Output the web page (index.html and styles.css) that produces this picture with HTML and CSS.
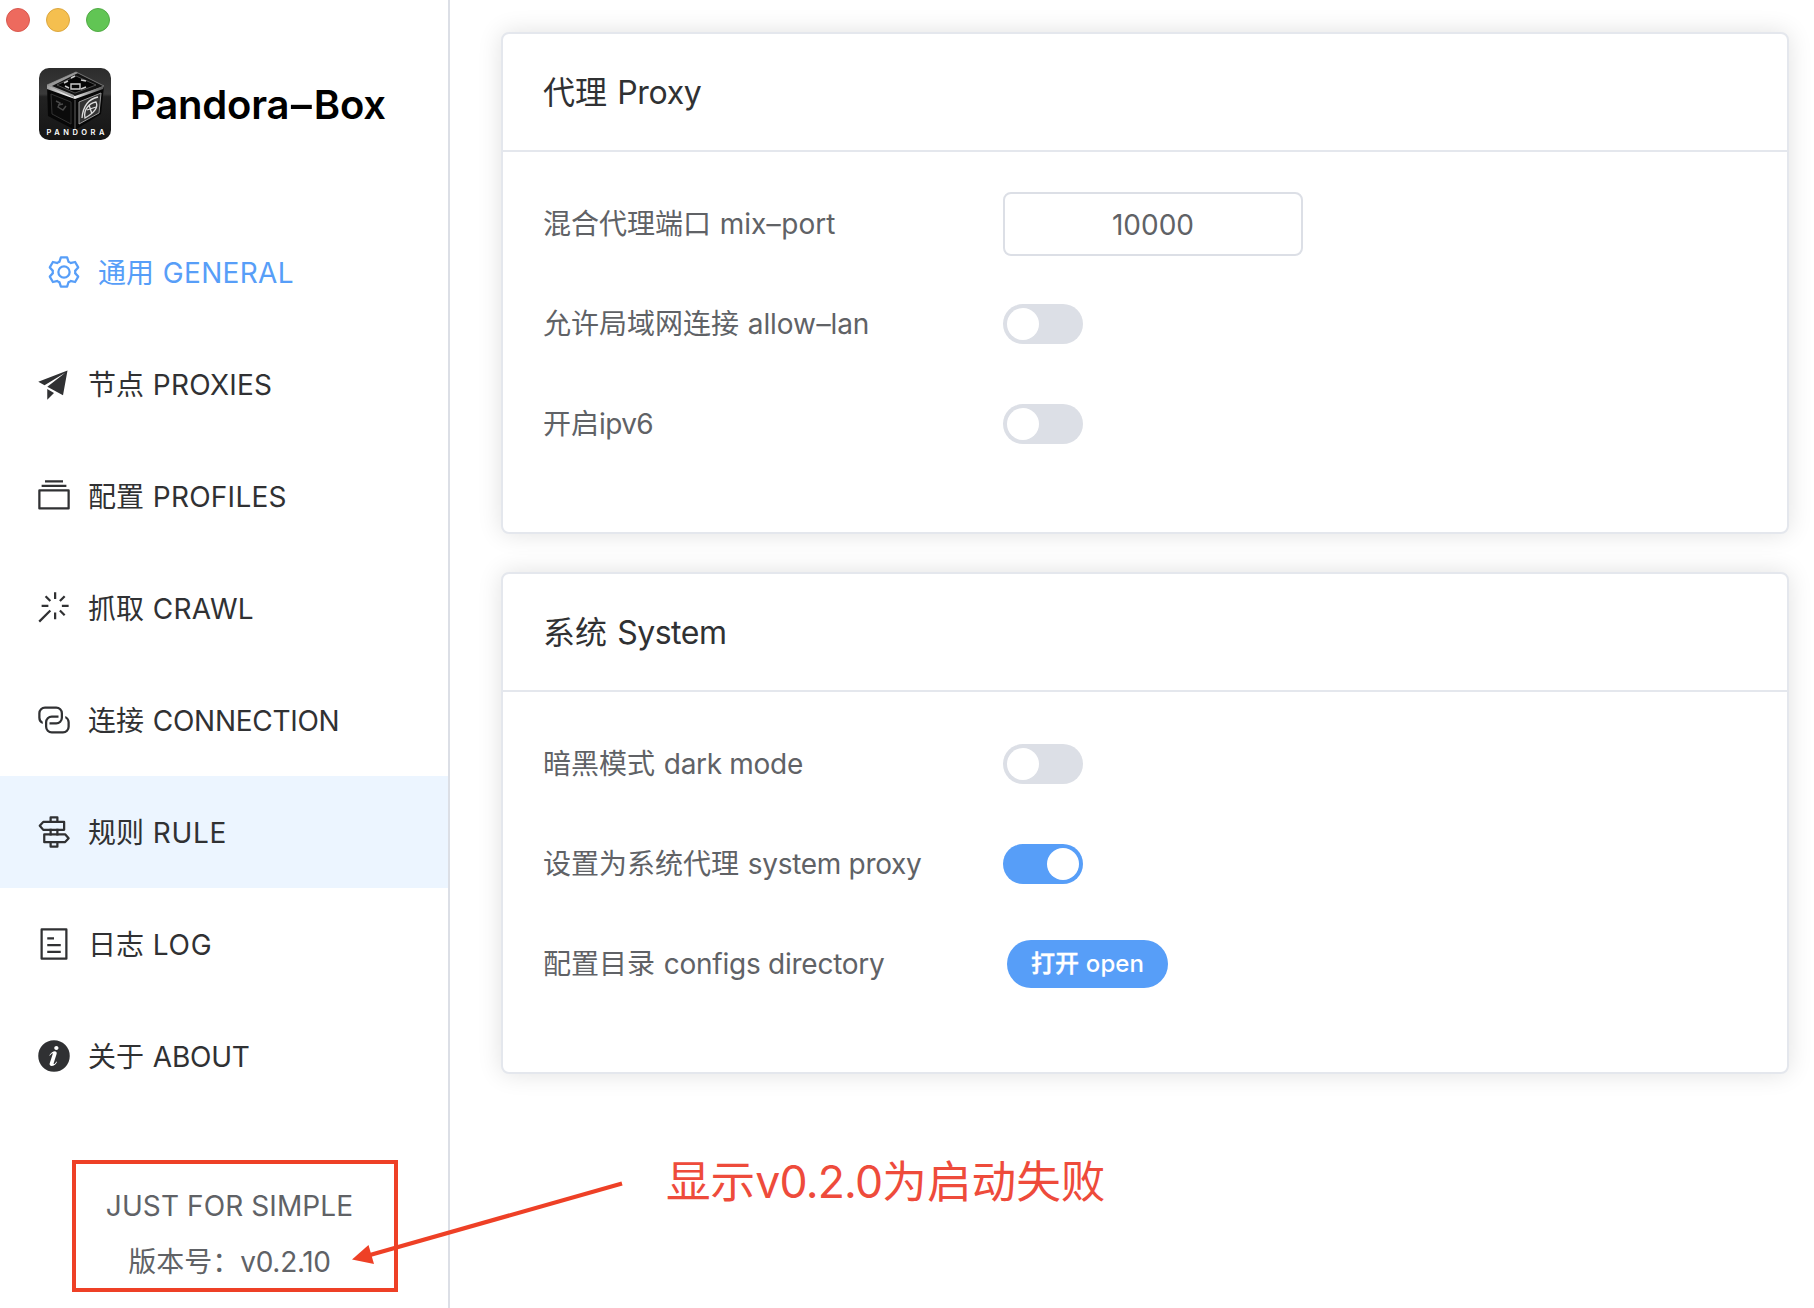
FILE: index.html
```html
<!DOCTYPE html>
<html lang="zh-CN">
<head>
<meta charset="utf-8">
<title>Pandora-Box</title>
<link rel="stylesheet" href="styles.css">
</head>
<body>
<div class="app">
  <aside class="sidebar">
    <div class="lights"><i class="light red"></i><i class="light yellow"></i><i class="light green"></i></div>
    <div class="brand">
      <svg class="logo" viewBox="0 0 72 72">
        <defs>
          <linearGradient id="bg" x1="0" y1="0" x2="0" y2="1"><stop offset="0" stop-color="#2c2c2c"/><stop offset=".36" stop-color="#3a3a3a"/><stop offset=".4" stop-color="#222"/><stop offset="1" stop-color="#151515"/></linearGradient>
          <linearGradient id="edge" x1="0" y1="0" x2="1" y2="0"><stop offset="0" stop-color="#999"/><stop offset=".4" stop-color="#fff"/><stop offset="1" stop-color="#555"/></linearGradient>
        </defs>
        <rect width="72" height="72" rx="10" fill="url(#bg)"/>
        <path d="M8 17 37 4l28 14-3 28-26 16L9 48z" fill="#070707"/>
        <path d="M8 17 37 4l28 14-29 12z" fill="#111" stroke="#777" stroke-width="1"/>
        <path d="M8 17l28 11 29-10-1 3-28 10L8 21z" fill="url(#edge)"/>
        <path d="M8 17 37 4l2 1-26 13 22 9v3z" fill="#999"/>
        <path d="M18 17 37 8l20 9-21 8z" fill="#050505" stroke="#777" stroke-width=".6"/>
        <path d="M32 16h9v5h-9zM25 15l4-2m-3 5 4 2m12-8 5 1m-5 8 5-2m-15-9 4-2" fill="none" stroke="#ccc" stroke-width="1.4"/>
        <path d="M36 32v30" stroke="#444" stroke-width="1.5"/>
        <path d="M12 26l20 8v22L13 46z" fill="#0b0b0b" stroke="#333"/>
        <path d="M17 33l4 2-2 4 5 3 3-4m-8-1 5-1" fill="none" stroke="#4a4a4a" stroke-width="1.4"/>
        <path d="M40 34l22-9-2 20-20 11z" fill="#333" stroke="#999" stroke-width="1"/>
        <path d="M43 50c1-12 7-19 16-21M46 50c-2-9 5-15 11-16 3 6-4 12-11 16zM50 37l3 9m-5-4 9-3" fill="none" stroke="#ddd" stroke-width="1.3"/>
        <text x="7.500" y="66.500" textLength="58" class="logo-text">PANDORA</text>
      </svg>
      <h1 class="title">Pandora<span class="dash">-</span>Box</h1>
    </div>
    <nav class="menu">
      <a class="item current"><svg class="icon" viewBox="0 0 1024 1024"><path d="M600.704 64a32 32 0 0 1 30.464 22.208l35.2 109.376c14.784 7.232 28.928 15.36 42.432 24.512l112.384-24.192a32 32 0 0 1 34.432 15.36L944.32 364.8a32 32 0 0 1-4.032 37.504l-77.12 85.12a357.12 357.12 0 0 1 0 49.024l77.12 85.248a32 32 0 0 1 4.032 37.504l-88.704 153.6a32 32 0 0 1-34.432 15.296L708.8 803.904c-13.44 9.088-27.648 17.28-42.368 24.512l-35.264 109.376A32 32 0 0 1 600.704 960H423.296a32 32 0 0 1-30.464-22.208L357.696 828.48a351.616 351.616 0 0 1-42.56-24.64l-112.32 24.256a32 32 0 0 1-34.432-15.36L79.68 659.2a32 32 0 0 1 4.032-37.504l77.12-85.248a357.12 357.12 0 0 1 0-48.896l-77.12-85.248A32 32 0 0 1 79.68 364.8l88.704-153.6a32 32 0 0 1 34.432-15.296l112.32 24.256c13.568-9.152 27.776-17.408 42.56-24.64l35.2-109.312A32 32 0 0 1 423.232 64H600.64zm-23.424 64H446.72l-36.352 113.088-24.512 11.968a294.113 294.113 0 0 0-34.816 20.096l-22.656 15.36-116.224-25.088-65.28 113.152 79.68 88.192-1.92 27.136a293.12 293.12 0 0 0 0 40.192l1.92 27.136-79.808 88.192 65.344 113.152 116.224-25.024 22.656 15.296a294.113 294.113 0 0 0 34.816 20.096l24.512 11.968L446.72 896h130.688l36.48-113.152 24.448-11.904a288.282 288.282 0 0 0 34.752-20.096l22.592-15.296 116.288 25.024 65.28-113.152-79.744-88.192 1.92-27.136a293.12 293.12 0 0 0 0-40.256l-1.92-27.136 79.808-88.128-65.344-113.152-116.288 24.96-22.592-15.232a287.616 287.616 0 0 0-34.752-20.096l-24.448-11.904L577.344 128zM512 320a192 192 0 1 1 0 384 192 192 0 0 1 0-384zm0 64a128 128 0 1 0 0 256 128 128 0 0 0 0-256z"/></svg><span class="text">通用 <b class="en general">GENERAL</b></span></a>
      <a class="item"><svg class="icon" viewBox="0 0 1024 1024"><path d="m64 448 832-320-128 704-446.080-243.328L832 192 242.816 545.536 64 448zm256 512V657.024L512 768 320 960z"/></svg><span class="text">节点 <b class="en proxies">PROXIES</b></span></a>
      <a class="item"><svg class="icon" viewBox="0 0 1024 1024"><path d="M128 384v448h768V384H128zm-32-64h832a32 32 0 0 1 32 32v512a32 32 0 0 1-32 32H96a32 32 0 0 1-32-32V352a32 32 0 0 1 32-32zm64-128h704v64H160zm96-128h512v64H256z"/></svg><span class="text">配置 <b class="en profiles">PROFILES</b></span></a>
      <a class="item"><svg class="icon" viewBox="0 0 1024 1024"><path d="M512 64h64v192h-64V64zm0 576h64v192h-64V640zM160 480v-64h192v64H160zm576 0v-64h192v64H736zM249.856 199.040l45.248-45.184L430.848 289.600 385.600 334.848 249.856 199.104zM657.152 606.400l45.248-45.248 135.744 135.744-45.248 45.248L657.152 606.400zM114.048 923.200 68.800 877.952l316.800-316.800 45.248 45.248-316.800 316.800zM702.400 334.848 657.152 289.600l135.744-135.744 45.248 45.248L702.400 334.848z"/></svg><span class="text">抓取 <b class="en crawl">CRAWL</b></span></a>
      <a class="item"><svg class="icon" viewBox="0 0 1024 1024"><path d="M640 384v64H448a128 128 0 0 0-128 128v128a128 128 0 0 0 128 128h320a128 128 0 0 0 128-128V576a128 128 0 0 0-64-110.848V394.880c74.560 26.368 128 97.472 128 181.056v128a192 192 0 0 1-192 192H448a192 192 0 0 1-192-192V576a192 192 0 0 1 192-192h192z"/><path d="M384 640v-64h192a128 128 0 0 0 128-128V320a128 128 0 0 0-128-128H256a128 128 0 0 0-128 128v128a128 128 0 0 0 64 110.848v70.272A192.064 192.064 0 0 1 64 448V320a192 192 0 0 1 192-192h320a192 192 0 0 1 192 192v128a192 192 0 0 1-192 192H384z"/></svg><span class="text">连接 <b class="en connection">CONNECTION</b></span></a>
      <a class="item hover"><svg class="icon" viewBox="0 0 1024 1024"><path d="M640 608h-64V416h64v192zm0 160v160a32 32 0 0 1-32 32H416a32 32 0 0 1-32-32V768h64v128h128V768h64zM384 608V416h64v192h-64zm256-352h-64V128H448v128h-64V96a32 32 0 0 1 32-32h192a32 32 0 0 1 32 32v160z"/><path d="m220.800 256-71.232 80 71.168 80H768V256H220.800zm-14.400-64H800a32 32 0 0 1 32 32v224a32 32 0 0 1-32 32H206.400a32 32 0 0 1-23.936-10.752l-99.584-112a32 32 0 0 1 0-42.496l99.584-112A32 32 0 0 1 206.400 192zm678.784 496-71.104 80H266.816V608h547.200l71.168 80zm-56.768-144H234.880a32 32 0 0 0-32 32v224a32 32 0 0 0 32 32h593.600a32 32 0 0 0 23.936-10.752l99.584-112a32 32 0 0 0 0-42.496l-99.584-112A32 32 0 0 0 828.480 544z"/></svg><span class="text">规则 <b class="en rule">RULE</b></span></a>
      <a class="item"><svg class="icon" viewBox="0 0 1024 1024"><path d="M192 128v768h640V128H192zm-32-64h704a32 32 0 0 1 32 32v832a32 32 0 0 1-32 32H160a32 32 0 0 1-32-32V96a32 32 0 0 1 32-32zm160 448h384v64H320v-64zm0-192h192v64H320v-64zm0 384h384v64H320v-64z"/></svg><span class="text">日志 <b class="en log">LOG</b></span></a>
      <a class="item"><svg class="icon" viewBox="0 0 1024 1024"><path d="M512 64a448 448 0 1 1 0 896.064A448 448 0 0 1 512 64zm67.200 275.072c33.280 0 60.288-23.104 60.288-57.344s-27.072-57.344-60.288-57.344c-33.280 0-60.160 23.104-60.160 57.344s26.880 57.344 60.160 57.344zM590.912 699.200c0-6.848 2.368-24.640 1.024-34.752l-52.608 60.544c-10.880 11.456-24.512 19.392-30.912 17.280a12.992 12.992 0 0 1-8.256-14.720l87.680-276.992c7.168-35.136-12.544-67.200-54.336-71.296-44.096 0-108.992 44.736-148.480 101.504 0 6.784-1.280 23.680.064 33.792l52.544-60.608c10.880-11.328 23.552-19.328 29.952-17.152a12.800 12.800 0 0 1 7.808 16.128L388.480 728.576c-10.048 32.256 8.960 63.872 55.040 71.040 67.840 0 107.904-43.648 147.456-100.416z"/></svg><span class="text">关于 <b class="en about">ABOUT</b></span></a>
    </nav>
    <footer class="version">
      <p><b class="en slogan">JUST FOR SIMPLE</b></p>
      <p>版本号：<b class="en number">v0.2.10</b></p>
    </footer>
  </aside>
  <main class="content">
    <section class="card">
      <h2 class="card-head">代理 <b class="en proxy">Proxy</b></h2>
      <div class="card-body">
        <div class="row"><label class="label">混合代理端口 <b class="en mixport">mix<span class="dash">-</span>port</b></label><div class="input">10000</div></div>
        <div class="row"><label class="label">允许局域网连接 <b class="en allowlan">allow<span class="dash">-</span>lan</b></label><div class="switch"></div></div>
        <div class="row"><label class="label">开启<b class="en ipv">ipv6</b></label><div class="switch"></div></div>
      </div>
    </section>
    <section class="card">
      <h2 class="card-head">系统 <b class="en system">System</b></h2>
      <div class="card-body">
        <div class="row"><label class="label">暗黑模式 <b class="en dark">dark mode</b></label><div class="switch"></div></div>
        <div class="row"><label class="label">设置为系统代理 <b class="en sysproxy">system proxy</b></label><div class="switch on"></div></div>
        <div class="row"><label class="label">配置目录 <b class="en configs">configs directory</b></label><button class="button">打开 <b class="en">open</b></button></div>
      </div>
    </section>
  </main>
  <div class="highlight"></div>
  <svg class="arrow" viewBox="0 0 280 90"><path d="M272 13.500 20 85" stroke="#ee4026" stroke-width="4.200"/><path d="M2 89.500 18.500 75 24 94z" fill="#ee4026"/></svg>
  <div class="note">显示<b class="en">v0.2.0</b>为启动失败</div>
</div>
</body>
</html>
```
FILE: styles.css
```css
* { box-sizing: border-box; margin: 0; padding: 0; }
body { width: 1814px; height: 1308px; overflow: hidden; background: #fff; color: #303133; font: 28px/1 "Noto Sans CJK SC", sans-serif; }
.app { position: relative; display: flex; height: 1308px; }
.en { font-family: Inter, sans-serif; font-weight: inherit; word-spacing: 0; }
.dash { display: inline-block; transform: scaleX(1.6); margin: 0 1px; }

.sidebar { width: 450px; border-right: 2px solid #dcdfe6; display: flex; flex-direction: column; }
.lights { display: flex; gap: 16px; padding: 8px 6px 0; height: 68px; }
.light { width: 24px; height: 24px; border-radius: 50%; border: 1px solid; }
.red { background: #ed6a5e; border-color: #d9594f; }
.yellow { background: #f5bf4f; border-color: #dca73f; }
.green { background: #61c554; border-color: #51ab45; }
.brand { display: flex; align-items: center; height: 72px; margin-left: 39px; gap: 19px; }
.logo { width: 72px; height: 72px; }
.logo-text { font: 600 7.5px Inter, sans-serif; fill: #fff; }
.title { padding-top: 2px; font: 600 40px/72px Inter, sans-serif; color: #000; white-space: nowrap; letter-spacing: -.2px; }
.title .dash { margin: 0 3px; }

.menu { margin-top: 76px; }
.item { display: flex; align-items: center; height: 112px; padding-left: 36px; gap: 16px; white-space: nowrap; }
.text { padding-bottom: 1px; word-spacing: 2.5px; }
.icon { width: 36px; height: 36px; fill: currentColor; flex: none; }
.current { padding-left: 46px; color: #579ef8; }
.hover { background: #ecf5ff; }
.general { letter-spacing: .33px; }
.proxies { letter-spacing: .25px; }
.profiles { letter-spacing: .25px; }
.crawl { letter-spacing: .3px; }
.connection { letter-spacing: -.28px; }
.rule { letter-spacing: .7px; }
.log { letter-spacing: .7px; }
.about { letter-spacing: -.2px; }
.version { display: flex; flex-direction: column; align-items: center; color: #606266; line-height: 56px; margin-top: 64px; padding-left: 11px; white-space: nowrap; }
.version p { height: 56px; }
.slogan { letter-spacing: .1px; }
.number { letter-spacing: -.3px; }

.content { flex: 1; padding: 32px 25px 0 51px; display: flex; flex-direction: column; gap: 38px; }
.card { height: 502px; border: 2px solid #e4e7ed; border-radius: 8px; background: #fff; box-shadow: 0 0 24px rgba(0, 0, 0, .12); }
.card-head { height: 118px; padding-left: 40px; border-bottom: 2px solid #e4e7ed; font-size: 32px; font-weight: 400; line-height: 113px; word-spacing: 3px; }
.card-body { padding: 22px 40px 0; }
.row { display: flex; align-items: center; height: 100px; color: #606266; }
.label { width: 460px; padding-bottom: 2px; white-space: nowrap; word-spacing: 2.5px; }
.proxy { letter-spacing: -.3px; }
.system { letter-spacing: -.5px; }
.allowlan { letter-spacing: -.1px; }
.ipv { letter-spacing: -.6px; }
.dark, .sysproxy { letter-spacing: -.3px; }
.configs { letter-spacing: -.25px; }
.input { width: 300px; height: 64px; border: 2px solid #dcdfe6; border-radius: 8px; text-align: center; font: 28px/62px Inter, sans-serif; }
.switch { width: 80px; height: 40px; padding: 4px; border-radius: 20px; background: #dcdfe6; display: flex; }
.switch::before { content: ""; width: 32px; height: 32px; border-radius: 50%; background: #fff; }
.switch.on { background: #579ef8; justify-content: flex-end; }
.button { margin-left: 4px; width: 161px; height: 48px; padding-bottom: 5px; border: 0; border-radius: 24px; background: #579ef8; color: #fff; font: 500 24px/43px "Noto Sans CJK SC", sans-serif; white-space: nowrap; word-spacing: 1.5px; -webkit-text-stroke: .4px #fff; }
.button .en { -webkit-text-stroke-width: 0; letter-spacing: .1px; }

.highlight { position: absolute; left: 72px; top: 1160px; width: 326px; height: 132px; border: 4px solid #ee4026; }
.arrow { position: absolute; left: 350px; top: 1170px; width: 280px; height: 90px; overflow: visible; }
.note { position: absolute; left: 666px; top: 1157px; font-size: 44.6px; line-height: 44px; color: #ee4b3b; white-space: nowrap; }
.note .en { letter-spacing: -.8px; }
```
